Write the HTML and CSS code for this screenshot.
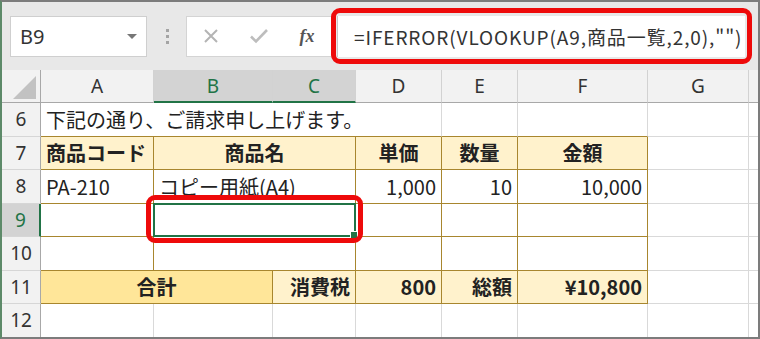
FILE: index.html
```html
<!DOCTYPE html>
<html lang="ja">
<head>
    <meta charset="UTF-8">
    <title>請求書 - Excel</title>
    <link rel="stylesheet" href="styles.css">
</head>
<body>
    <div class="frame">
        <div class="toolbar">
            <div class="namebox">
                <span>B9</span>
                <span class="caret"></span>
            </div>
            <div class="dots"><i></i><i></i><i></i></div>
            <div class="btnbox">
                <span class="btn">
                    <svg width="16" height="16" viewBox="0 0 16 16"><path d="M2 2L14 14M14 2L2 14" stroke="#b4b4b4" stroke-width="2" fill="none"/></svg>
                </span>
                <span class="btn">
                    <svg width="20" height="18" viewBox="0 0 20 18"><path d="M2 9.5L7 14.5L18 3" stroke="#bdbdbd" stroke-width="2.6" fill="none"/></svg>
                </span>
                <span class="btn fx">fx</span>
            </div>
            <div class="formula">
                <span>=IFERROR(VLOOKUP(A9,商品一覧,2,0),"")</span>
                <div class="callout"></div>
            </div>
        </div>

        <div class="sheet">
            <div class="ch corner"><span class="tri"></span></div>
            <div class="ch">A</div>
            <div class="ch on">B</div>
            <div class="ch on">C</div>
            <div class="ch">D</div>
            <div class="ch">E</div>
            <div class="ch">F</div>
            <div class="ch">G</div>
            <div class="ch"></div>

            <div class="rh">6</div>
            <div class="c s4 top">下記の通り、ご請求申し上げます。</div>
            <div class="c top"></div>
            <div class="c top"></div>
            <div class="c"></div>
            <div class="c"></div>

            <div class="rh">7</div>
            <div class="c t hd b">商品コード</div>
            <div class="c t hd b s2 mid">商品名</div>
            <div class="c t hd b mid">単価</div>
            <div class="c t hd b mid">数量</div>
            <div class="c t hd b mid">金額</div>
            <div class="c"></div>
            <div class="c"></div>

            <div class="rh">8</div>
            <div class="c t">PA-210</div>
            <div class="c t s2">コピー用紙(A4)</div>
            <div class="c t num">1,000</div>
            <div class="c t num">10</div>
            <div class="c t num">10,000</div>
            <div class="c"></div>
            <div class="c"></div>

            <div class="rh on">9</div>
            <div class="c t"></div>
            <div class="c t s2 picked">
                <div class="sel"><span class="handle"></span></div>
                <div class="callout"></div>
            </div>
            <div class="c t"></div>
            <div class="c t"></div>
            <div class="c t"></div>
            <div class="c"></div>
            <div class="c"></div>

            <div class="rh">10</div>
            <div class="c t"></div>
            <div class="c t s2"></div>
            <div class="c t"></div>
            <div class="c t"></div>
            <div class="c t"></div>
            <div class="c"></div>
            <div class="c"></div>

            <div class="rh">11</div>
            <div class="c t sum b s2 mid">合計</div>
            <div class="c t hd b num">消費税</div>
            <div class="c t hd b num">800</div>
            <div class="c t hd b num">総額</div>
            <div class="c t hd b num">¥10,800</div>
            <div class="c"></div>
            <div class="c"></div>

            <div class="rh">12</div>
            <div class="c"></div>
            <div class="c"></div>
            <div class="c"></div>
            <div class="c"></div>
            <div class="c"></div>
            <div class="c"></div>
            <div class="c"></div>
            <div class="c"></div>
        </div>
    </div>
</body>
</html>
```

FILE: styles.css
```css
body {
    margin: 0;
    background: #ffffff;
    font-family: "Noto Sans CJK JP", sans-serif;
    color: #222;
}
.frame {
    width: 760px;
    height: 339px;
    box-sizing: border-box;
    border: 2px solid #7c7c7c;
    border-left-color: #5d8a69;
    overflow: hidden;
}

/* formula bar */
.toolbar {
    height: 68px;
    background: #e8e8e8;
    display: flex;
    align-items: center;
    padding-left: 8px;
}
.namebox {
    width: 137px;
    height: 41px;
    box-sizing: border-box;
    background: white;
    border: 1px solid #cfcfcf;
    display: flex;
    align-items: center;
    justify-content: space-between;
    padding: 0 9px;
    font-family: "Noto Sans", sans-serif;
    font-size: 20px;
    color: #333;
}
.caret {
    width: 0;
    height: 0;
    border-left: 5px solid transparent;
    border-right: 5px solid transparent;
    border-top: 5px solid #777;
}
.dots {
    width: 3px;
    margin: 0 17px 0 19px;
    display: flex;
    flex-direction: column;
    gap: 3px;
}
.dots i {
    width: 3px;
    height: 3px;
    background: #a4a4a4;
}
.btnbox {
    width: 146px;
    height: 41px;
    box-sizing: border-box;
    background: white;
    border: 1px solid #d4d4d4;
    display: flex;
    align-items: center;
}
.btn {
    width: 50px;
    display: flex;
    justify-content: center;
}
.fx {
    font-family: "Liberation Serif", serif;
    font-style: italic;
    font-weight: bold;
    font-size: 18px;
    color: #555;
}
.formula {
    position: relative;
    width: 408px;
    height: 41px;
    box-sizing: border-box;
    margin-left: 5px;
    background: white;
    border-left: 1px solid #c8c8c8;
    display: flex;
    align-items: center;
    padding-left: 16px;
    font-size: 19px;
    letter-spacing: 0.9px;
    color: #333;
    white-space: nowrap;
}
.callout {
    position: absolute;
    left: -7px;
    right: -7px;
    top: -8px;
    bottom: -7px;
    border: 5px solid #ee0a0a;
    border-radius: 9px;
    pointer-events: none;
}

/* sheet grid */
.sheet {
    display: grid;
    grid-template-columns: 39px 113px 119px 83px 86px 76px 130px 101px 1fr;
    grid-template-rows: 33px repeat(7, 33.5px);
    font-size: 20px;
}
.ch {
    background: #f2f2f2;
    border-right: 1px solid #d2d2d2;
    border-bottom: 1px solid #a8a8a8;
    display: flex;
    align-items: center;
    justify-content: center;
    font-family: "Noto Sans", sans-serif;
    font-size: 19px;
    color: #333;
}
.ch.on {
    background: #d3d3d3;
    color: #217346;
    border-bottom: 2px solid #217346;
}
.corner {
    position: relative;
    border-right-color: #a8a8a8;
}
.tri {
    position: absolute;
    right: 4px;
    bottom: 3px;
    width: 23px;
    height: 23px;
    background: #c2c2c2;
    clip-path: polygon(100% 0, 100% 100%, 0 100%);
}
.rh {
    background: #f2f2f2;
    border-right: 1px solid #a8a8a8;
    border-bottom: 1px solid #d6d6d6;
    display: flex;
    align-items: center;
    justify-content: center;
    font-family: "Noto Sans", sans-serif;
    font-size: 19px;
    color: #333;
}
.rh.on {
    background: #d3d3d3;
    color: #217346;
    border-right: 2px solid #217346;
}
.c {
    border-right: 1px solid #d9d9d9;
    border-bottom: 1px solid #d9d9d9;
    display: flex;
    align-items: center;
    padding: 0 5px;
    white-space: nowrap;
    min-width: 0;
}
.s2 {
    grid-column: span 2;
}
.s4 {
    grid-column: span 4;
}
.top {
    border-bottom-color: #a8862e;
}
.t {
    border-right-color: #a8862e;
    border-bottom-color: #a8862e;
}
.hd {
    background: #fff2cc;
}
.sum {
    background: #ffe699;
}
.b {
    font-weight: bold;
}
.mid {
    justify-content: center;
}
.num {
    justify-content: flex-end;
}
.picked {
    position: relative;
}
.sel {
    position: absolute;
    left: -1px;
    right: -1px;
    top: -1px;
    bottom: -1px;
    border: 2px solid #217346;
}
.handle {
    position: absolute;
    right: -4px;
    bottom: -4px;
    width: 6px;
    height: 6px;
    background: #217346;
    border: 1px solid white;
}
.picked .callout {
    left: -8px;
    right: -8px;
    top: -9px;
    bottom: -7px;
}
```
